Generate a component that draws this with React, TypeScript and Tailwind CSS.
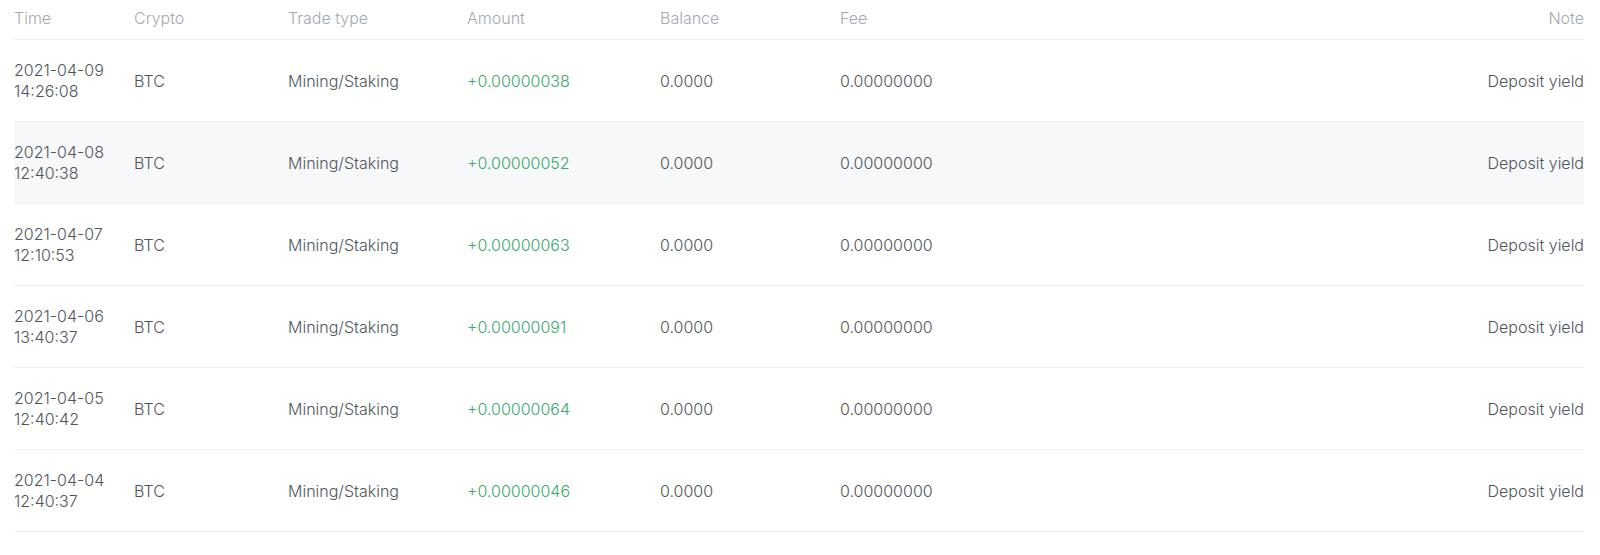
const rows = [
  { date: "2021-04-09", time: "14:26:08", amount: "+0.00000038" },
  { date: "2021-04-08", time: "12:40:38", amount: "+0.00000052" },
  { date: "2021-04-07", time: "12:10:53", amount: "+0.00000063" },
  { date: "2021-04-06", time: "13:40:37", amount: "+0.00000091" },
  { date: "2021-04-05", time: "12:40:42", amount: "+0.00000064" },
  { date: "2021-04-04", time: "12:40:37", amount: "+0.00000046" },
];

const cols = "grid grid-cols-[120px_154px_179px_193px_180px_1fr_auto] items-center";

export default function App() {
  return (
    <div className="w-[1600px] h-[555px] bg-white pl-[14px] pr-[16px] font-['Inter',sans-serif] text-[16px] font-light">
      {/* header */}
      <div className={`${cols} h-[40px] border-b border-[#eeeff2] text-[#a3a8b0] pb-[3px]`}>
        <div>Time</div>
        <div>Crypto</div>
        <div>Trade type</div>
        <div>Amount</div>
        <div>Balance</div>
        <div>Fee</div>
        <div className="text-right">Note</div>
      </div>

      {rows.map((r, i) => (
        <div
          key={i}
          className={`${cols} h-[82px] border-b border-[#eeeff2] text-[#50555c] ${
            i === 1 ? "bg-[#f7f8fa]" : ""
          }`}
        >
          <div className="leading-[21px]">
            <div>{r.date}</div>
            <div>{r.time}</div>
          </div>
          <div>BTC</div>
          <div>Mining/Staking</div>
          <div className="text-[#3aa96c]">{r.amount}</div>
          <div>0.0000</div>
          <div>0.00000000</div>
          <div className="text-right">Deposit yield</div>
        </div>
      ))}
    </div>
  );
}
